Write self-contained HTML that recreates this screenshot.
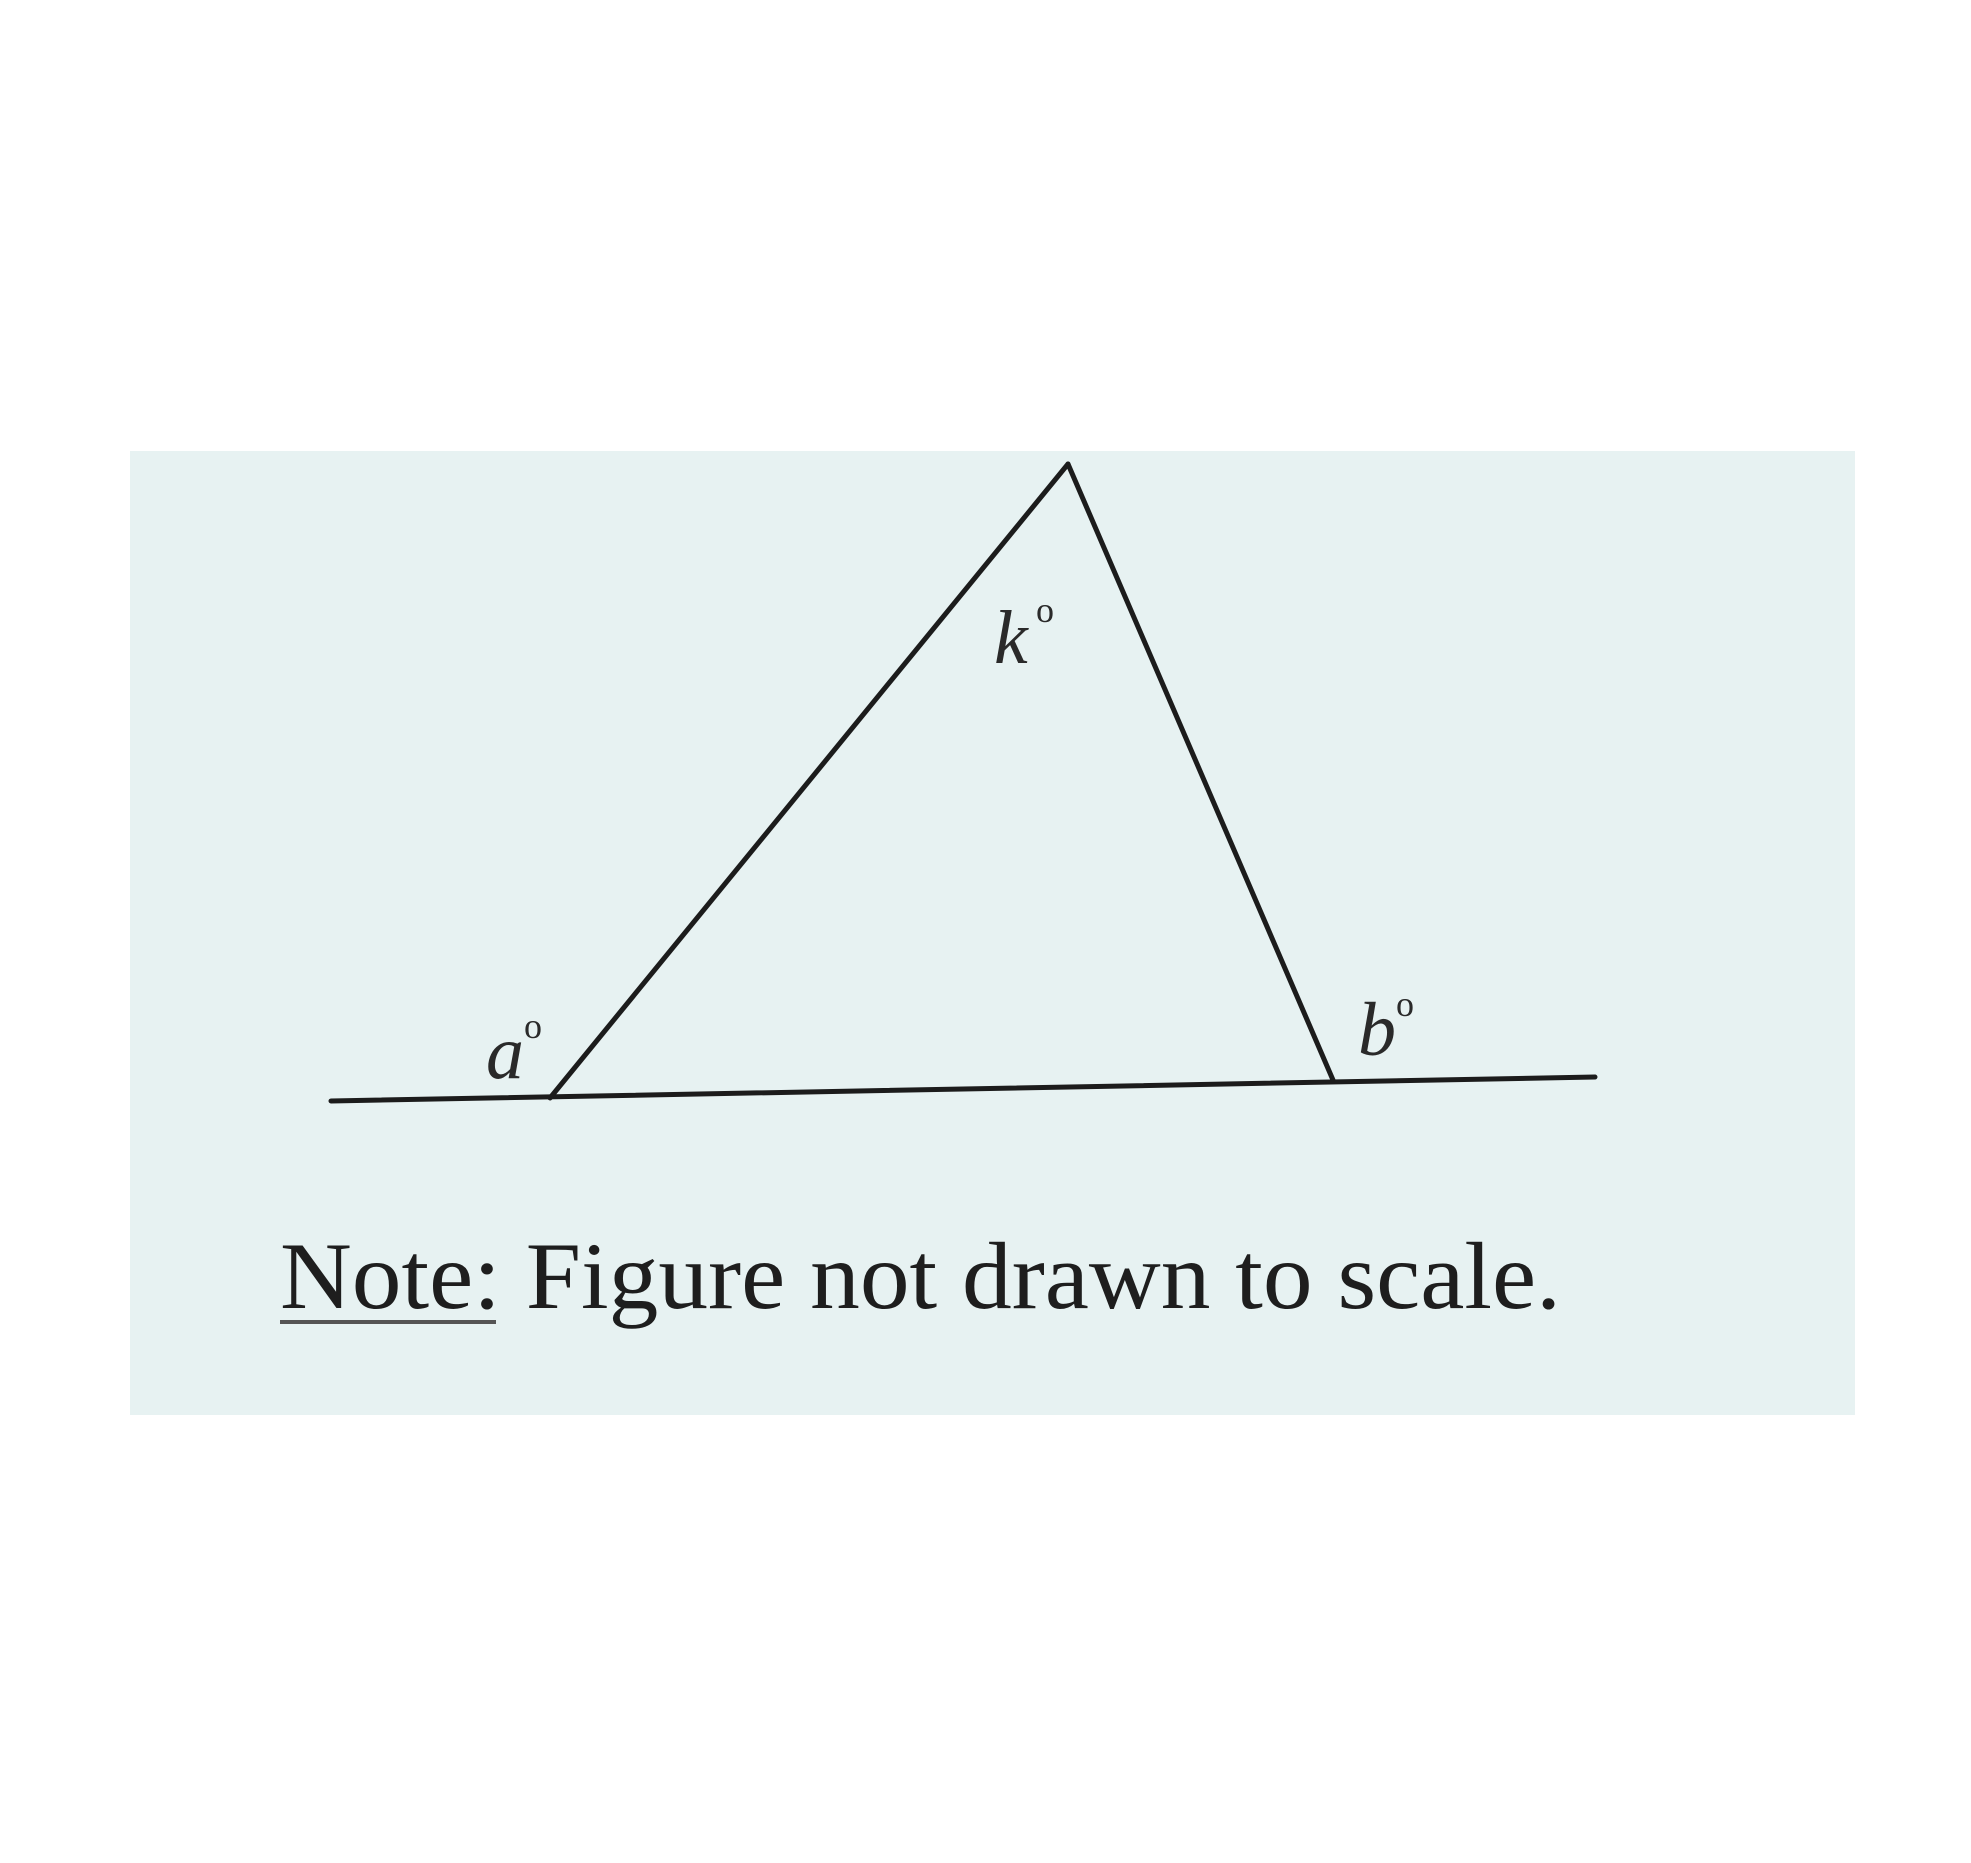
<!DOCTYPE html>
<html><head><style>html,body{margin:0;padding:0;background:#fff;}svg{display:block}</style></head>
<body>
<svg width="1971" height="1863" viewBox="0 0 1971 1863" xmlns="http://www.w3.org/2000/svg">
<rect x="0" y="0" width="1971" height="1863" fill="#ffffff"/>
<rect x="130" y="451" width="1725" height="964" fill="#e7f2f2"/>
<g stroke="#1c1c1c" stroke-width="5" fill="none" stroke-linecap="round">
<line x1="331" y1="1101" x2="1595" y2="1077"/>
<line x1="550" y1="1098" x2="1068" y2="464"/>
<line x1="1068" y1="464" x2="1333" y2="1080"/>
</g>
<g font-family="Liberation Serif, serif" font-style="italic" fill="#2a2a2a" font-size="76">
<text x="994" y="663">k</text><text x="1036" y="622" font-size="36" font-style="normal">o</text>
<text x="486" y="1078">a</text><text x="524" y="1038" font-size="36" font-style="normal">o</text>
<text x="1358" y="1055">b</text><text x="1396" y="1016" font-size="36" font-style="normal">o</text>
</g>
<text x="280" y="1308" font-family="Liberation Serif, serif" font-size="95" fill="#1e1e1e" textLength="1281" lengthAdjust="spacingAndGlyphs">Note: Figure not drawn to scale.</text>
<line x1="280" y1="1322" x2="496" y2="1322" stroke="#555" stroke-width="4"/>
</svg>
</body></html>
